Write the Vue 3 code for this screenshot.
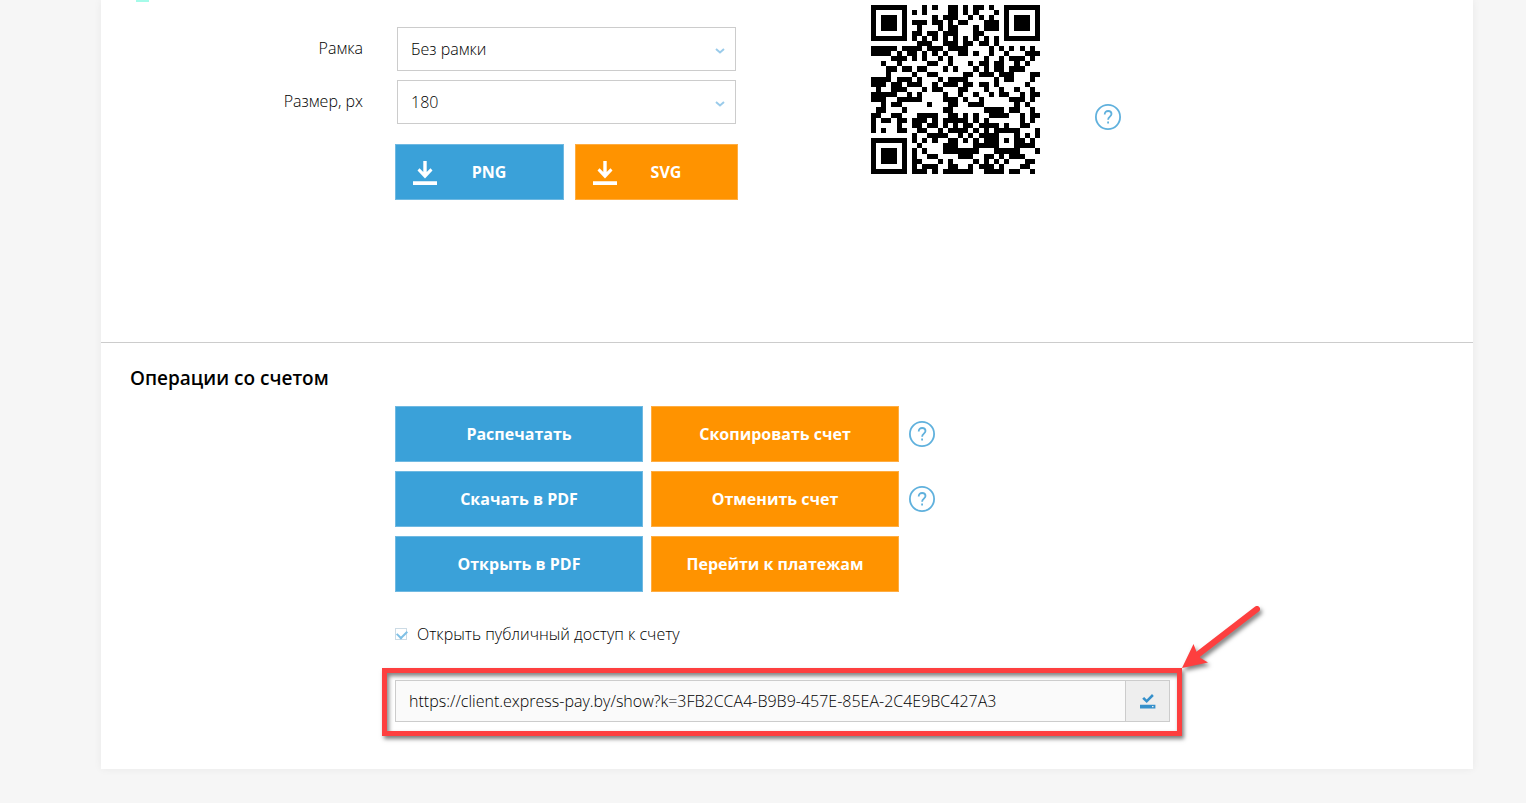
<template>
  <div class="page">
    <main class="card">
      <span class="top_mark"></span>
      <section class="qr_section">
        <form class="qr_form" @submit.prevent>
          <div class="form_row">
            <label for="frame">Рамка</label>
            <div class="select_box">
              <select id="frame" v-model="frame">
                <option v-for="item in frames" :key="item">{{ item }}</option>
              </select>
              <svg class="chevron" viewBox="0 0 10 6"><path d="M1 1l4 3.4L9 1" /></svg>
            </div>
          </div>
          <div class="form_row">
            <label for="size">Размер, px</label>
            <div class="select_box">
              <select id="size" v-model="size">
                <option v-for="item in sizes" :key="item">{{ item }}</option>
              </select>
              <svg class="chevron" viewBox="0 0 10 6"><path d="M1 1l4 3.4L9 1" /></svg>
            </div>
          </div>
          <div class="download_row">
            <button type="button" class="btn blue download png">
              <svg viewBox="0 0 24 24"><path d="M10.300 0h3.400v11l3.800-3.800 2 2.300L12 17.500 4.500 9.500l2-2.300 3.800 3.800zM0 20.300h24V24H0z" /></svg>
              <span>PNG</span>
            </button>
            <button type="button" class="btn orange download svg">
              <svg viewBox="0 0 24 24"><path d="M10.300 0h3.400v11l3.800-3.800 2 2.300L12 17.500 4.500 9.500l2-2.300 3.800 3.800zM0 20.300h24V24H0z" /></svg>
              <span>SVG</span>
            </button>
          </div>
        </form>
        <svg class="qr" viewBox="0 0 33 33" shape-rendering="crispEdges" role="img">
          <path :d="qrPath" />
        </svg>
        <button type="button" class="help qr_help">
          <svg viewBox="0 0 26 26">
            <circle cx="13" cy="13" r="12.100" />
            <path d="M9.700 10.400c0-2 1.400-3.400 3.400-3.400s3.400 1.300 3.400 3.100c0 2.500-3.400 2.700-3.400 5.600M13.100 17.600v1.800" />
          </svg>
        </button>
      </section>

      <section class="operations">
        <h2>Операции со счетом</h2>
        <div class="operations_body">
          <div class="operation_row" v-for="row in operations" :key="row.left">
            <button type="button" class="btn blue">{{ row.left }}</button>
            <button type="button" class="btn orange">{{ row.right }}</button>
            <button type="button" class="help" v-if="row.help">
              <svg viewBox="0 0 26 26">
                <circle cx="13" cy="13" r="12.100" />
                <path d="M9.700 10.400c0-2 1.400-3.400 3.400-3.400s3.400 1.300 3.400 3.100c0 2.500-3.400 2.700-3.400 5.600M13.100 17.600v1.800" />
              </svg>
            </button>
          </div>
          <label class="access">
            <input type="checkbox" v-model="isPublic" />
            <span>Открыть публичный доступ к счету</span>
          </label>
        </div>
        <div class="link_frame">
          <div class="link_box">
            <input type="text" readonly :value="link" aria-label="Ссылка на счет" />
            <button type="button" @click="copyLink">
              <svg viewBox="0 0 16 16">
                <path d="M2.200 5.800l1.900-1.900 2.600 2.500L12 1l1.800 1.900-7.100 7.200z" />
                <path fill-rule="evenodd" d="M0 11.800h15.400v3.700H0zM12 13h1.500v1.300H12z" />
              </svg>
            </button>
          </div>
          <svg class="arrow" viewBox="0 0 84 70">
            <path class="line" d="M75 6L14 53" />
            <path class="head" d="M0 65l11.500-24 3.500 9 3.500 5 7.500 4.500z" />
          </svg>
        </div>
      </section>
    </main>
  </div>
</template>

<script setup>
import { ref, computed } from 'vue'

const link = ref('https://client.express-pay.by/show?k=3FB2CCA4-B9B9-457E-85EA-2C4E9BC427A3')
const frames = ['Без рамки', 'С рамкой']
const sizes = ['180', '240', '320']
const frame = ref('Без рамки')
const size = ref('180')
const isPublic = ref(true)
const operations = [
  { left: 'Распечатать', right: 'Скопировать счет', help: true },
  { left: 'Скачать в PDF', right: 'Отменить счет', help: true },
  { left: 'Открыть в PDF', right: 'Перейти к платежам', help: false },
]

function copyLink() {
  navigator.clipboard?.writeText(link.value)
}

// QR version 4-L: 33 modules, 80 data codewords, 20 correction codewords
const SIZE = 33
const DATA_LEN = 80
const EC_LEN = 20

function mul(a, b) {
  let r = 0
  for (let i = 7; i >= 0; i--) {
    r = (r << 1) ^ ((r >> 7) * 0x11d)
    r ^= ((b >> i) & 1) * a
  }
  return r
}

function codewords(text) {
  const bits = []
  const push = (value, len) => {
    for (let i = len - 1; i >= 0; i--) bits.push((value >> i) & 1)
  }
  const bytes = new TextEncoder().encode(text)
  push(4, 4)
  push(bytes.length, 8)
  bytes.forEach(b => push(b, 8))
  push(0, 4)
  const data = []
  for (let i = 0; i < bits.length; i += 8) data.push(parseInt(bits.slice(i, i + 8).join(''), 2))
  for (let pad = 0xec; data.length < DATA_LEN; pad ^= 0xec ^ 0x11) data.push(pad)

  // генератор Рида-Соломона
  const gen = new Array(EC_LEN).fill(0)
  gen[EC_LEN - 1] = 1
  let root = 1
  for (let i = 0; i < EC_LEN; i++) {
    for (let j = 0; j < EC_LEN; j++) {
      gen[j] = mul(gen[j], root)
      if (j + 1 < EC_LEN) gen[j] ^= gen[j + 1]
    }
    root = mul(root, 2)
  }
  const ec = new Array(EC_LEN).fill(0)
  data.forEach(b => {
    const factor = b ^ ec.shift()
    ec.push(0)
    gen.forEach((g, i) => { ec[i] ^= mul(g, factor) })
  })
  return data.concat(ec)
}

function buildMatrix(text) {
  const m = Array.from({ length: SIZE }, () => new Array(SIZE).fill(null))
  const square = (cy, cx, radius, isDark) => {
    for (let y = -radius; y <= radius; y++) {
      for (let x = -radius; x <= radius; x++) {
        if (m[cy + y] && m[cy + y][cx + x] !== undefined) {
          m[cy + y][cx + x] = isDark(Math.max(Math.abs(x), Math.abs(y))) ? 1 : 0
        }
      }
    }
  }
  for (let i = 0; i < SIZE; i++) {
    m[6][i] = m[i][6] = (i + 1) % 2
  }
  const finder = d => d !== 2 && d !== 4
  square(3, 3, 4, finder)
  square(3, SIZE - 4, 4, finder)
  square(SIZE - 4, 3, 4, finder)
  square(26, 26, 2, d => d !== 1)

  // формат: уровень L, маска 2
  const format = '111110110101010'.split('').map(Number)
  const first = [[8, 0], [8, 1], [8, 2], [8, 3], [8, 4], [8, 5], [8, 7], [8, 8], [7, 8], [5, 8], [4, 8], [3, 8], [2, 8], [1, 8], [0, 8]]
  first.forEach(([y, x], i) => { m[y][x] = format[i] })
  for (let i = 0; i < 7; i++) m[SIZE - 1 - i][8] = format[i]
  for (let i = 7; i < 15; i++) m[8][SIZE - 15 + i] = format[i]
  m[SIZE - 8][8] = 1

  const words = codewords(text)
  let n = 0
  let up = true
  for (let right = SIZE - 1; right > 0; right -= 2) {
    if (right === 6) right = 5
    for (let i = 0; i < SIZE; i++) {
      const y = up ? SIZE - 1 - i : i
      for (let x = right; x > right - 2; x--) {
        if (m[y][x] !== null) continue
        const bit = n < words.length * 8 ? (words[n >> 3] >> (7 - (n & 7))) & 1 : 0
        m[y][x] = bit ^ (x % 3 === 0 ? 1 : 0)
        n++
      }
    }
    up = !up
  }
  return m
}

const qrPath = computed(() => {
  let d = ''
  buildMatrix(link.value).forEach((line, y) => {
    line.forEach((dark, x) => {
      if (dark) d += `M${x} ${y}h1v1h-1z`
    })
  })
  return d
})
</script>

<style>
body {
  background: #f6f6f6;
}
</style>

<style scoped>
.page {
  padding: 0 53px 34px 101px;
  font-family: "Open Sans", "Noto Sans", sans-serif;
  font-size: 16px;
  font-weight: 300;
  line-height: 24px;
  color: #000;
}
.page * {
  box-sizing: border-box;
}
.card {
  position: relative;
  background: #fff;
  box-shadow: 0 0 8px rgba(0, 0, 0, 0.06);
}
.top_mark {
  position: absolute;
  left: 35px;
  top: 0;
  width: 13px;
  height: 2px;
  background: #a5fbe9;
}
button, input, select {
  font: inherit;
  color: inherit;
}
button {
  cursor: pointer;
}
.qr_section {
  display: flex;
  align-items: flex-start;
  padding: 5px 0 142px;
  border-bottom: 1px solid #ccc;
}
.qr_form {
  width: 637px;
  padding-top: 22px;
}
.form_row {
  display: flex;
  margin-bottom: 9px;
}
.form_row label {
  width: 262px;
  margin-right: 34px;
  padding-top: 9px;
  text-align: right;
}
.select_box {
  position: relative;
  flex: 1;
  margin-right: 2px;
}
.select_box select {
  display: block;
  width: 100%;
  height: 44px;
  padding: 0 13px;
  appearance: none;
  background: #fff;
  border: 1px solid #ccc;
  border-radius: 0;
}
.chevron {
  position: absolute;
  right: 11px;
  top: 21px;
  width: 10px;
  height: 6px;
  fill: none;
  stroke: #9acbea;
  stroke-width: 2;
  pointer-events: none;
}
.download_row {
  display: flex;
  gap: 11px;
  padding: 11px 0 0 294px;
}
.btn {
  height: 56px;
  padding: 0;
  border: 1px solid;
  font-weight: 700;
  color: #fff;
}
.blue {
  background: #3aa1d9;
  border-color: #6fb9e2;
}
.orange {
  background: #ff9300;
  border-color: #ffad42;
}
.download {
  display: flex;
  align-items: center;
  padding: 0 22px 0 17px;
}
.download svg {
  width: 24px;
  height: 24px;
  margin-top: 2px;
  fill: #fff;
}
.download span {
  flex: 1;
  text-align: center;
}
.png {
  width: 169px;
}
.svg {
  width: 163px;
}
.qr {
  width: 169px;
  height: 169px;
  margin-left: 133px;
}
.help {
  width: 26px;
  height: 26px;
  padding: 0;
  border: 0;
  background: none;
}
.help svg {
  display: block;
  fill: none;
  stroke: #60b1dd;
  stroke-width: 1.8;
}
.qr_help {
  margin: 99px 0 0 55px;
}
.operations {
  padding: 23px 0 33px;
}
.operations h2 {
  margin: 0 0 16px 29px;
  font-size: 19px;
  font-weight: 600;
  line-height: 24px;
}
.operations_body {
  padding-left: 294px;
}
.operation_row {
  display: flex;
  align-items: center;
  gap: 8px;
  margin-bottom: 9px;
}
.operation_row .btn {
  width: 248px;
}
.operation_row .help {
  margin-left: 2px;
}
.access {
  display: inline-flex;
  align-items: center;
  gap: 10px;
  margin: 21px 0 22px;
}
.access input {
  position: relative;
  width: 12px;
  height: 12px;
  margin: 0;
  appearance: none;
  background: #fff;
  border: 1px solid #ccdbe5;
}
.access input:checked::after {
  content: "";
  position: absolute;
  left: 1px;
  top: 1px;
  width: 8px;
  height: 5px;
  border: solid #7fc0e6;
  border-width: 0 0 2px 2px;
  transform: rotate(-45deg);
}
.link_frame {
  position: relative;
  width: 800px;
  margin-left: 281px;
  padding: 7px 7px 9px 8px;
  border: 5px solid #fd3f3f;
  box-shadow: 2px 3px 4px rgba(0, 0, 0, 0.5), inset 2px 3px 4px rgba(0, 0, 0, 0.5);
}
.link_box {
  display: flex;
  height: 42px;
  border: 1px solid #ccc;
}
.link_box input {
  flex: 1;
  min-width: 0;
  padding: 0 13px;
  border: 0;
  background: #fafafa;
}
.link_box button {
  width: 44px;
  padding: 0;
  border: 0;
  border-left: 1px solid #ccc;
  background: #eee;
}
.link_box svg {
  display: block;
  width: 16px;
  height: 16px;
  margin: 0 auto;
  fill: #3590cb;
}
.arrow {
  position: absolute;
  left: 795px;
  bottom: 58px;
  width: 84px;
  height: 70px;
  overflow: visible;
  filter: drop-shadow(2px 3px 2px rgba(0, 0, 0, 0.5));
  pointer-events: none;
}
.line {
  fill: none;
  stroke: #fd3f3f;
  stroke-width: 6;
  stroke-linecap: round;
}
.head {
  fill: #fd3f3f;
}
</style>
